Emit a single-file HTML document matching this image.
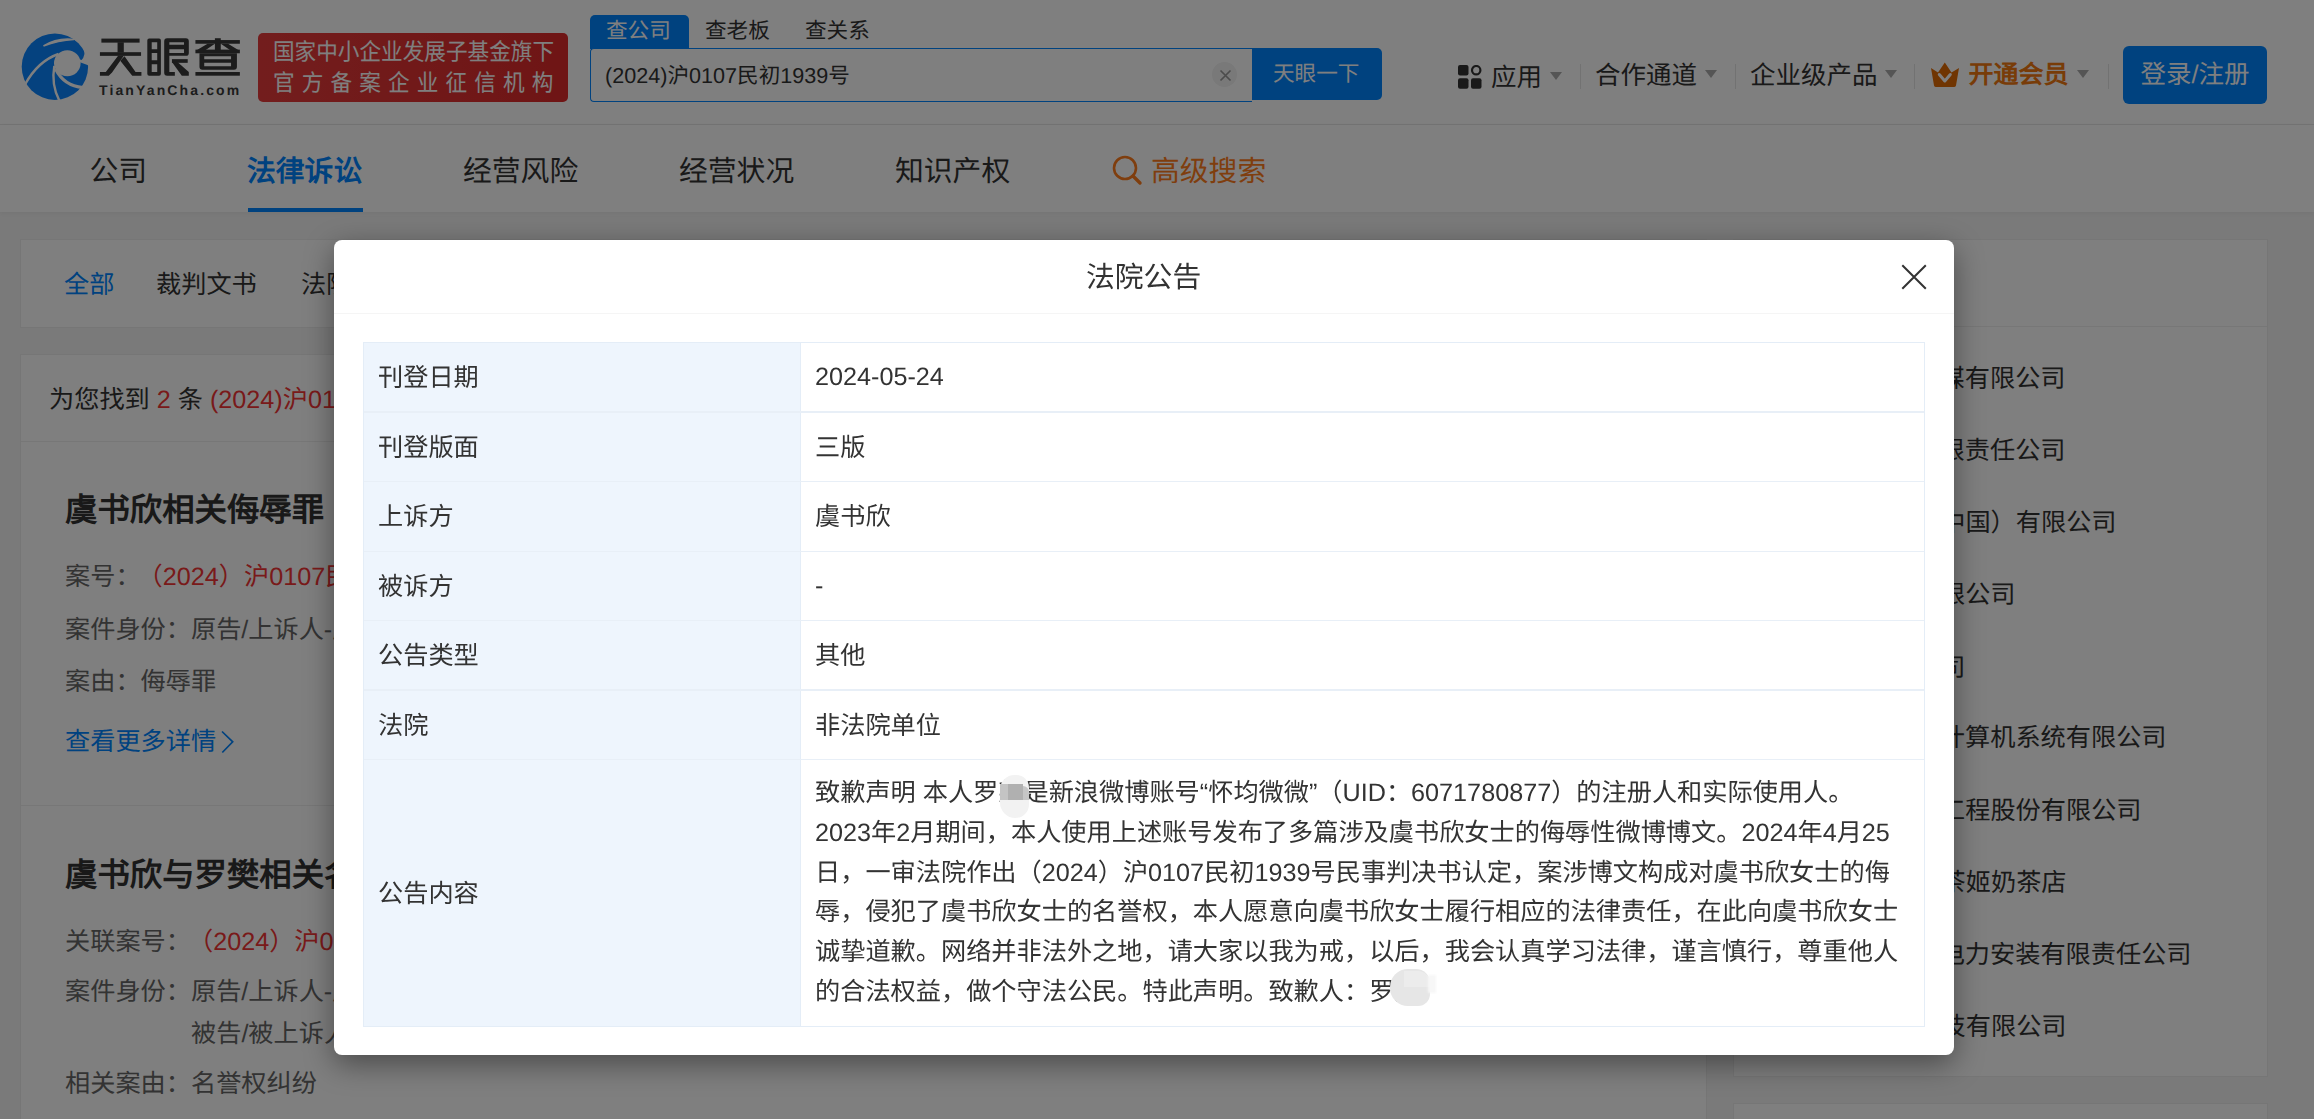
<!DOCTYPE html>
<html lang="zh-CN">
<head>
<meta charset="utf-8">
<style>
html,body{margin:0;padding:0;}
body{width:2314px;height:1119px;overflow:hidden;position:relative;background:#f4f4f4;font-family:"Liberation Sans",sans-serif;color:#333;text-rendering:geometricPrecision;text-spacing-trim:space-all;}
.a{position:absolute;}
.t{position:absolute;white-space:nowrap;line-height:1;}
#hdr{left:0;top:0;width:2314px;height:124px;background:#fff;border-bottom:1px solid #e9e9e9;}
#nav{left:0;top:125px;width:2314px;height:87px;background:#fff;box-shadow:0 1px 5px rgba(0,0,0,0.06);}
.card{position:absolute;background:#fff;box-shadow:0 0 0 1px #ededed;}
.f25{font-size:25.2px;}
.f29{font-size:28.8px;}
.f22{font-size:21.6px;}
.blue{color:#0084ff;}
.red{color:#f23434;}
.tri{position:absolute;width:0;height:0;border-left:6.5px solid transparent;border-right:6.5px solid transparent;border-top:8px solid #aaa;}
.sep{position:absolute;width:1px;height:25px;background:#e5e5e5;top:64px;}
#ov{left:0;top:0;width:2314px;height:1119px;background:rgba(0,0,0,0.5);}
.hl{left:364px;width:1560px;height:1.6px;background:#e8eff7;}
#modal{left:334px;top:240px;width:1620px;height:815px;background:#fff;border-radius:8px;box-shadow:0 9px 30px rgba(0,0,0,0.42);}
</style>
</head>
<body>
<!-- ===== HEADER ===== -->
<div class="a" id="hdr"></div>
<!-- logo -->
<svg class="a" style="left:20px;top:30px" width="72" height="74" viewBox="20 30 72 74">
  <circle cx="54.9" cy="66.7" r="33.2" fill="#0a84ff"/>
  <path d="M43.5 46 Q57 37.5 74 39.5 Q58 40.5 43.5 46Z" fill="#fff" stroke="#fff" stroke-width="1.6"/>
  <ellipse cx="67.3" cy="63.3" rx="13.3" ry="13" fill="#fff"/>
  <path d="M79 60.5 L90 64.5" stroke="#fff" stroke-width="2.6"/>
  <path d="M25 84.5 Q38 61 58.5 54" fill="none" stroke="#fff" stroke-width="2.4"/>
  <path d="M59.5 101 Q51 85 54.3 66" fill="none" stroke="#fff" stroke-width="2.4"/>
  <path d="M55.5 69 Q64 86 83 87.5" fill="none" stroke="#fff" stroke-width="3"/>
  <path d="M73.5 39.2 Q85.5 45 84.3 54.5 Q83.6 59 80.6 61.3 L89 64.2 L93 28 Z" fill="#fff"/>
</svg>
<svg class="a" style="left:90px;top:25px" width="170" height="80" viewBox="0 0 2314 1089" fill="#383838">
  <!-- 天 -->
  <rect x="155" y="185" width="520" height="55"/>
  <rect x="135" y="370" width="560" height="50"/>
  <rect x="375" y="235" width="85" height="140"/>
  <polygon points="385,415 462,415 300,645 255,690 135,690 135,640 215,640"/>
  <polygon points="412,485 470,425 620,640 700,640 700,690 575,690"/>
  <!-- 眼 -->
  <path fill-rule="evenodd" d="M805 185 H940 Q965 185 965 210 V665 Q965 690 940 690 H805 Q780 690 780 665 V210 Q780 185 805 185Z M840 235 V330 H915 V235Z M840 380 V480 H915 V380Z M840 535 V640 H915 V535Z"/>
  <path fill-rule="evenodd" d="M1050 180 H1305 Q1345 180 1345 220 V380 Q1345 420 1305 420 H1080 V640 H1155 V690 H1050 Q1010 690 1010 650 V220 Q1010 180 1050 180Z M1080 235 V270 H1280 V235Z M1080 330 V380 H1280 V330Z"/>
  <rect x="1115" y="465" width="215" height="50"/>
  <polygon points="1115,505 1190,505 1345,640 1345,690 1250,690"/>
  <!-- 查 -->
  <rect x="1435" y="205" width="605" height="50"/>
  <rect x="1700" y="180" width="80" height="165"/>
  <polygon points="1600,255 1700,255 1560,350 1440,350"/>
  <polygon points="1780,255 1880,255 2035,350 1920,350"/>
  <rect x="1435" y="335" width="605" height="50"/>
  <path fill-rule="evenodd" d="M1490 385 H2000 V570 Q2000 610 1960 610 H1530 Q1490 610 1490 570Z M1555 425 V465 H1920 V425Z M1555 515 V560 H1920 V515Z"/>
  <rect x="1435" y="640" width="605" height="50"/>
</svg>
<div class="t" id="tyc" style="left:99px;top:82.8px;font-size:14px;font-weight:bold;color:#383838;letter-spacing:2.13px">TianYanCha.com</div>
<!-- badge -->
<div class="a" style="left:258px;top:33px;width:310px;height:69px;border-radius:5px;background:linear-gradient(90deg,#e63b3b,#de2a2a);"></div>
<div class="t" style="left:273px;top:41.3px;color:#fff;font-size:23.5px;transform:scaleX(0.92);transform-origin:0 0">国家中小企业发展子基金旗下</div>
<div class="t" style="left:273px;top:72.3px;color:#fff;font-size:23.5px;letter-spacing:7.74px;transform:scaleX(0.92);transform-origin:0 0">官方备案企业征信机构</div>
<!-- search tabs -->
<div class="a" style="left:590px;top:15px;width:99px;height:34px;background:#0084ff;border-radius:5px 5px 0 0;"></div>
<div class="t f22" style="left:606px;top:20px;color:#fff">查公司</div>
<div class="t f22" style="left:705px;top:20px;color:#333">查老板</div>
<div class="t f22" style="left:805px;top:20px;color:#333">查关系</div>
<!-- input -->
<div class="a" style="left:590px;top:48px;width:662px;height:54px;box-sizing:border-box;border:1.5px solid #0084ff;border-right:none;border-radius:4px 0 0 4px;background:#fff"></div>
<div class="t f22" style="left:605px;top:65px;color:#333">(2024)沪0107民初1939号</div>
<div class="a" style="left:1212px;top:62px;width:25px;height:25px;border-radius:50%;background:#f2f2f2"></div>
<svg class="a" style="left:1219px;top:68.5px" width="13" height="13" viewBox="0 0 13 13"><path d="M1.5 1.5L11.5 11.5M11.5 1.5L1.5 11.5" stroke="#999" stroke-width="1.7"/></svg>
<div class="a" style="left:1252px;top:48px;width:130px;height:52px;background:#0084ff;border-radius:0 5px 5px 0"></div>
<div class="t f22" style="left:1273px;top:63px;color:#fff">天眼一下</div>
<!-- right nav -->
<svg class="a" style="left:1458px;top:64.7px" width="24" height="24" viewBox="0 0 24 24">
 <rect x="0" y="0" width="10.5" height="10.5" rx="2" fill="#333"/>
 <circle cx="18.2" cy="5.2" r="4.2" fill="none" stroke="#333" stroke-width="2.2"/>
 <rect x="0" y="13.3" width="10.5" height="10.5" rx="2" fill="#333"/>
 <rect x="13" y="13.3" width="10.5" height="10.5" rx="2" fill="#333"/>
</svg>
<div class="t f25" style="left:1491px;top:66px;font-size:25.5px">应用</div>
<div class="tri" style="left:1550px;top:72px"></div>
<div class="sep" style="left:1580px"></div>
<div class="t f25" style="left:1595px;top:64px;font-size:25.5px">合作通道</div>
<div class="tri" style="left:1705px;top:70px"></div>
<div class="sep" style="left:1735px"></div>
<div class="t f25" style="left:1750px;top:64px;font-size:25.5px">企业级产品</div>
<div class="tri" style="left:1885px;top:70px"></div>
<div class="sep" style="left:1914px"></div>
<svg class="a" style="left:1930px;top:62px" width="30" height="26" viewBox="0 0 30 26">
 <path d="M1 6 L8 10.5 L14.8 0.5 L21.5 10.5 L29 6 L26 23.5 Q25.5 25 24 25 L6 25 Q4.5 25 4 23.5 Z" fill="#e06a04"/>
 <path d="M9.3 12.5 L14.8 19 L20.3 12.5" fill="none" stroke="#fff" stroke-width="3" stroke-linecap="round" stroke-linejoin="round"/>
</svg>
<div class="t f25" style="left:1968.5px;top:63px;font-size:25px;font-weight:bold;color:#f07810">开通会员</div>
<div class="tri" style="left:2077px;top:70px"></div>
<div class="sep" style="left:2108px"></div>
<div class="a" style="left:2123px;top:46px;width:144px;height:58px;background:#0084ff;border-radius:6px"></div>
<div class="t f25" style="left:2140.5px;top:63px;font-size:25.5px;color:#fff">登录/注册</div>

<!-- ===== NAV ===== -->
<div class="a" id="nav"></div>
<div class="t f29" style="left:89.5px;top:158px">公司</div>
<div class="t f29" style="left:247px;top:158px;font-weight:bold;color:#0084ff">法律诉讼</div>
<div class="a" style="left:248px;top:208px;width:115px;height:4px;background:#0084ff"></div>
<div class="t f29" style="left:463px;top:158px">经营风险</div>
<div class="t f29" style="left:679px;top:158px">经营状况</div>
<div class="t f29" style="left:895px;top:158px">知识产权</div>
<svg class="a" style="left:1112px;top:155px" width="31" height="31" viewBox="0 0 31 31"><circle cx="13" cy="13" r="11" fill="none" stroke="#fe7c1d" stroke-width="2.6"/><path d="M21 21L28 28" stroke="#fe7c1d" stroke-width="3.4" stroke-linecap="round"/></svg>
<div class="t f29" style="left:1151px;top:158px;color:#fe7c1d">高级搜索</div>

<!-- ===== BODY CARDS ===== -->
<div class="card" style="left:21px;top:240px;width:1685px;height:87px"></div>
<div class="t f25 blue" style="left:64px;top:273px">全部</div>
<div class="t f25" style="left:156px;top:273px">裁判文书</div>
<div class="t f25" style="left:301px;top:273px">法院公告</div>

<div class="card" style="left:21px;top:355px;width:1685px;height:764px"></div>
<div class="a" style="left:21px;top:440.5px;width:1685px;height:1px;background:#efefef"></div>
<div class="t f25" style="left:49px;top:388px">为您找到 <span class="red">2</span> 条 <span class="red">(2024)沪0107民初1939号</span> 相关的法律诉讼</div>

<div class="t" style="left:65px;top:494px;font-size:32.4px;font-weight:bold;color:#333">虞书欣相关侮辱罪</div>
<div class="t f25" style="left:65px;top:565px;color:#666">案号：<span class="red" style="margin-left:-3px">（2024）沪0107民初1939号</span></div>
<div class="t f25" style="left:65px;top:618px;color:#666">案件身份：原告/上诉人-虞书欣</div>
<div class="t f25" style="left:65px;top:670px;color:#666">案由：侮辱罪</div>
<div class="t f25 blue" style="left:65px;top:730px">查看更多详情</div>
<svg class="a" style="left:220px;top:729px" width="16" height="25" viewBox="0 0 16 25"><path d="M2 2.5L12.7 12.8L2.3 23.5" fill="none" stroke="#0084ff" stroke-width="1.7"/></svg>
<div class="a" style="left:21px;top:805px;width:1685px;height:1px;background:#efefef"></div>

<div class="t" style="left:65px;top:859px;font-size:32.4px;font-weight:bold;color:#333">虞书欣与罗樊相关名誉权纠纷</div>
<div class="t f25" style="left:65px;top:930px;color:#666">关联案号：<span class="red" style="margin-left:-3px">（2024）沪0107民初1939号</span></div>
<div class="t f25" style="left:65px;top:980px;color:#666">案件身份：原告/上诉人-虞书欣</div>
<div class="t f25" style="left:191px;top:1022px;color:#666">被告/被上诉人-罗樊</div>
<div class="t f25" style="left:65px;top:1072px;color:#666">相关案由：名誉权纠纷</div>

<!-- right sidebar -->
<div class="card" style="left:1734px;top:240px;width:533px;height:836px"></div>
<div class="a" style="left:1734px;top:326px;width:533px;height:1px;background:#efefef"></div>
<div class="card" style="left:1734px;top:1104px;width:533px;height:40px"></div>
<div class="t f25" style="right:248.5px;top:367px">上海某某文化传媒有限公司</div>
<div class="t f25" style="right:248.5px;top:439px">上海某某影视文化有限责任公司</div>
<div class="t f25" style="right:197.5px;top:511px">某某某娱乐（中国）有限公司</div>
<div class="t f25" style="right:298.5px;top:583px">上海某某有限公司</div>
<div class="t f25" style="right:348.5px;top:656px">某某某公司</div>
<div class="t f25" style="right:147.5px;top:726px">北京某某计算机系统有限公司</div>
<div class="t f25" style="right:172.5px;top:799px">上海某某工程股份有限公司</div>
<div class="t f25" style="right:247.5px;top:871px">上海某某茶姬奶茶店</div>
<div class="t f25" style="right:122.5px;top:943px">上海某某电力安装有限责任公司</div>
<div class="t f25" style="right:247.5px;top:1015px">上海某某科技有限公司</div>

<!-- ===== OVERLAY ===== -->
<div class="a" id="ov"></div>

<!-- ===== MODAL ===== -->
<div class="a" id="mlayer" style="left:0;top:0;width:2314px;height:1119px;will-change:transform">
<div class="a" id="modal"></div>
<div class="t f29" style="left:1086px;top:263.5px;color:#333">法院公告</div>
<svg class="a" style="left:1900px;top:262.5px" width="28" height="28" viewBox="0 0 28 28"><path d="M2.3 2.3L25.8 25.8M25.8 2.3L2.3 25.8" stroke="#333" stroke-width="2"/></svg>
<div class="a" style="left:334px;top:313px;width:1620px;height:1px;background:#f5f5f5"></div>
<!-- table -->
<div class="a" style="left:363px;top:342px;width:1562px;height:685px;box-sizing:border-box;border:1px solid #e4edf7;"></div>
<div class="a" style="left:364px;top:343px;width:437px;height:683px;background:#eef5fd;"></div>
<div class="a" style="left:800px;top:343px;width:1px;height:683px;background:#e4edf7;"></div>
<div class="a hl" style="top:411.2px"></div>
<div class="a hl" style="top:480.8px"></div>
<div class="a hl" style="top:550.5px"></div>
<div class="a hl" style="top:619.8px"></div>
<div class="a hl" style="top:689.2px"></div>
<div class="a hl" style="top:758.5px"></div>
<div class="t f25" style="left:378px;top:366px">刊登日期</div>
<div class="t f25" style="left:815px;top:364.8px">2024-05-24</div>
<div class="t f25" style="left:378px;top:436px">刊登版面</div>
<div class="t f25" style="left:815px;top:436px">三版</div>
<div class="t f25" style="left:378px;top:505px">上诉方</div>
<div class="t f25" style="left:815px;top:505px">虞书欣</div>
<div class="t f25" style="left:378px;top:575px">被诉方</div>
<div class="t f25" style="left:815px;top:574px">-</div>
<div class="t f25" style="left:378px;top:644px">公告类型</div>
<div class="t f25" style="left:815px;top:644px">其他</div>
<div class="t f25" style="left:378px;top:714px">法院</div>
<div class="t f25" style="left:815px;top:714px">非法院单位</div>
<div class="t f25" style="left:378px;top:882px">公告内容</div>
<div class="a f25" style="left:815px;top:774.2px;line-height:39.7px;white-space:nowrap;color:#333">致歉声明 本人罗某是新浪微博账号“怀均微微”（UID：6071780877）的注册人和实际使用人。<br>2023年2月期间，本人使用上述账号发布了多篇涉及虞书欣女士的侮辱性微博博文。2024年4月25<br>日，一审法院作出（2024）沪0107民初1939号民事判决书认定，案涉博文构成对虞书欣女士的侮<br>辱，侵犯了虞书欣女士的名誉权，本人愿意向虞书欣女士履行相应的法律责任，在此向虞书欣女士<br>诚挚道歉。网络并非法外之地，请大家以我为戒，以后，我会认真学习法律，谨言慎行，尊重他人<br>的合法权益，做个守法公民。特此声明。致歉人：罗某</div>
<!-- censor patches -->
<div class="a" style="left:1000px;top:775px;width:29px;height:42.5px;border-radius:15px 13px 14px 16px;background:#f2f2f2;filter:blur(0.6px)"></div>
<div class="a" style="left:1000px;top:784px;width:8px;height:15.5px;background:#c4c4c4"></div>
<div class="a" style="left:1008px;top:784px;width:15px;height:15.5px;background:#b0b0b0"></div>
<div class="a" style="left:1023px;top:786px;width:5.5px;height:13.5px;background:#c6c6c6;border-radius:0 6px 0 0"></div>
<div class="a" style="left:1390px;top:969px;width:40px;height:37px;border-radius:18px 14px 12px 18px;background:#e6e6e6;filter:blur(0.6px)"></div>
<div class="a" style="left:1404px;top:971px;width:26px;height:16px;background:#ececec;border-radius:0 12px 0 0"></div>
<div class="a" style="left:1428px;top:975px;width:8px;height:18px;background:#f7f7f7;filter:blur(1px)"></div>
</div>
</body>
</html>
